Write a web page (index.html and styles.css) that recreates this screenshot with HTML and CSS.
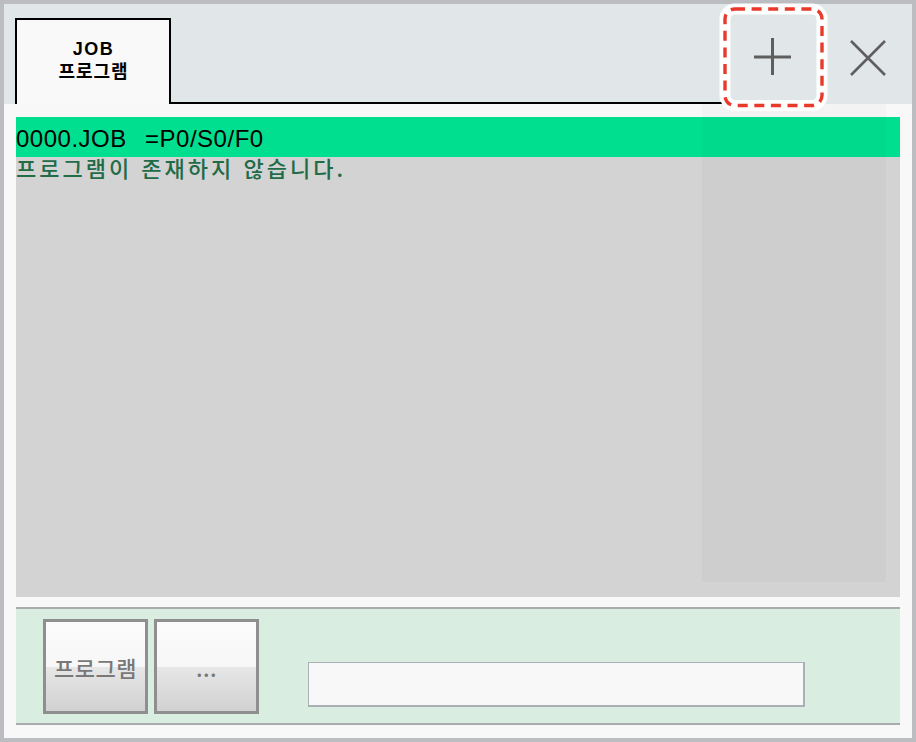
FILE: index.html
```html
<!DOCTYPE html>
<html lang="ko">
<head>
<meta charset="utf-8">
<title>JOB 프로그램</title>
<link rel="stylesheet" href="styles.css">
</head>
<body>
<div class="window">
  <header class="header">
    <div class="tab">
      <span class="tab-line tab-latin">JOB</span>
      <span class="tab-line">프로그램</span>
    </div>
    <div class="filler"></div>
    <button class="icon-btn plus-btn" type="button" aria-label="추가">
      <svg width="38" height="38" viewBox="0 0 38 38"><path d="M0 19H37M18.5 0V37" stroke="#5e5e5e" stroke-width="3" fill="none"/></svg>
    </button>
    <button class="icon-btn close-btn" type="button" aria-label="닫기">
      <svg width="36" height="36" viewBox="0 0 36 36"><path d="M1 1L35 35M35 1L1 35" stroke="#5f5f5f" stroke-width="2.6" fill="none"/></svg>
    </button>
    <svg class="highlight" width="114" height="112" viewBox="0 0 114 112">
      <rect x="7" y="7" width="97" height="96.5" rx="10" ry="10" fill="none" stroke="#ffffff" stroke-width="11"/>
      <rect x="7" y="7" width="97" height="96.5" rx="10" ry="10" fill="none" stroke="#e8392b" stroke-width="3.4" stroke-dasharray="10 6.6"/>
    </svg>
  </header>
  <main class="panel">
    <div class="shade"></div>
    <section class="list">
      <div class="row-head">0000.JOB  =P0/S0/F0</div>
      <div class="row-msg">프로그램이 존재하지 않습니다.</div>
    </section>
    <footer class="toolbar">
      <button class="tool-btn" type="button">프로그램</button>
      <button class="tool-btn" type="button">...</button>
      <div class="input-box"></div>
    </footer>
  </main>
</div>
</body>
</html>
```
FILE: styles.css
```css
* { box-sizing: border-box; }
html, body { margin: 0; padding: 0; }
body { background: #bcbdc1; font-family: "Noto Sans CJK KR", "Liberation Sans", sans-serif; }

.window {
  width: 916px;
  height: 742px;
  border: 4px solid #bcbdc1;
  display: flex;
  flex-direction: column;
  background: #f8f8f8;
}

.header {
  position: relative;
  height: 100px;
  flex: 0 0 100px;
  background: #e1e6e9;
  display: flex;
  align-items: stretch;
}

.tab {
  margin-left: 11px;
  margin-top: 14px;
  width: 156px;
  height: 86px;
  background: #f9f9f9;
  border: 2px solid #000;
  border-bottom: none;
  padding-top: 19px;
  display: flex;
  flex-direction: column;
  align-items: center;
  font-family: "Noto Sans CJK KR", sans-serif;
  font-weight: 700;
  font-size: 18px;
  color: #000;
}
.tab-line {
  display: block;
  height: 21px;
  line-height: 21px;
  letter-spacing: 1px;
  padding-left: 1px;
}
.tab-latin {
  font-family: "Liberation Sans", Arial, sans-serif;
  font-size: 18px;
  letter-spacing: 1.5px;
}

.filler {
  flex: 1;
  border-bottom: 2px solid #000;
}

.icon-btn {
  border: none;
  background: transparent;
  padding: 0;
  margin: 0;
  display: flex;
  align-items: center;
  justify-content: center;
}
.plus-btn { width: 100px; padding-top: 6px; }
.close-btn { width: 89px; padding-top: 8px; }

.highlight {
  position: absolute;
  left: 714px;
  top: -2px;
  z-index: 3;
}

.panel {
  position: relative;
  flex: 1;
  display: flex;
  flex-direction: column;
  padding: 13px 12px 0 12px;
  background: #f8f8f8;
}

.shade {
  position: absolute;
  left: 698px;
  top: 0;
  width: 184px;
  height: 478px;
  background: rgba(0, 0, 0, 0.02);
  z-index: 2;
  pointer-events: none;
}

.list {
  height: 480px;
  flex: 0 0 480px;
  background: #d3d3d3;
}

.row-head {
  height: 40px;
  background: #00df8f;
  font-family: "Liberation Sans", Arial, sans-serif;
  font-size: 24px;
  line-height: 44px;
  letter-spacing: 0.5px;
  word-spacing: 2px;
  color: #000;
  white-space: pre;
  overflow: hidden;
}

.row-msg {
  font-family: "Noto Sans CJK KR", sans-serif;
  font-size: 22px;
  font-weight: 500;
  line-height: 20px;
  letter-spacing: 3px;
  color: #216b47;
  white-space: pre;
}

.toolbar {
  margin-top: 10px;
  height: 118px;
  flex: 0 0 118px;
  background: #d9ede1;
  border-top: 2px solid #a9abac;
  border-bottom: 2px solid #a9abac;
  display: flex;
  align-items: flex-start;
  padding: 10px 0 0 27px;
  gap: 6px;
}

.tool-btn {
  width: 105px;
  height: 95px;
  border: 3px solid #8f8f8f;
  background: linear-gradient(to bottom, #fbfbfb 0%, #f7f7f7 50%, #e7e7e7 50%, #d1d1d1 100%);
  font-family: "Noto Sans CJK KR", sans-serif;
  font-size: 22px;
  font-weight: 500;
  letter-spacing: 0.5px;
  color: #787878;
  padding: 0;
  margin: 0;
  line-height: 24px;
}

.input-box {
  margin-left: 43px;
  margin-top: 43px;
  width: 497px;
  height: 45px;
  background: #f8f8f8;
  border-top: 1px solid #aab0b5;
  border-left: 1px solid #aab0b5;
  border-right: 2px solid #aab0b5;
  border-bottom: 2px solid #aab0b5;
}
```
